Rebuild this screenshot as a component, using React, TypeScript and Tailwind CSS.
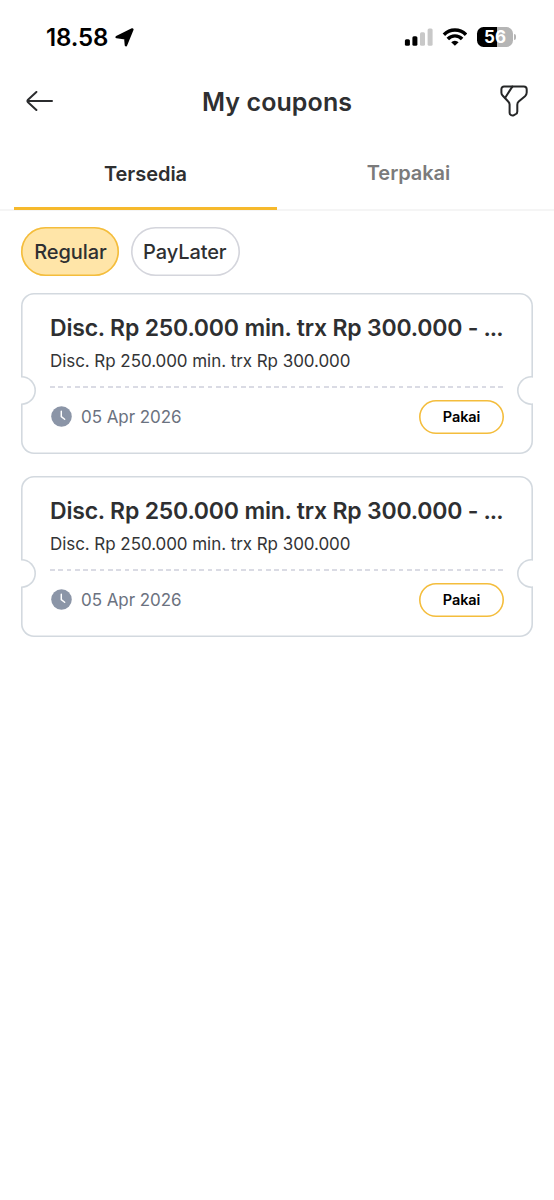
import React from "react";

function StatusBar() {
  return (
    <div className="flex h-[74px] items-center justify-between pl-[46px] pr-[38px]">
      <div className="flex items-center gap-[7px] pt-[1px]">
        <span className="text-[24px] leading-[30px] font-semibold tracking-[-0.15px] text-black">18.58</span>
        <svg width="19" height="19" viewBox="0 0 18 18">
          <path d="M16.4 1.4 L10.4 16.2 L9.8 9.6 L1.6 8.6 Z" fill="#000" stroke="#000" strokeWidth="2.4" strokeLinejoin="round" />
        </svg>
      </div>
      <div className="flex items-center">
        <svg className="-mr-px" width="29" height="18" viewBox="-0.3 0 29 18">
          <rect x="0.6" y="11.3" width="5" height="6.4" rx="1.5" fill="#000" />
          <rect x="8.1" y="8.2" width="5" height="9.5" rx="1.5" fill="#000" />
          <rect x="15.7" y="4.3" width="5" height="13.4" rx="1.5" fill="#c8c8c8" />
          <rect x="23.3" y="0.5" width="5" height="17.2" rx="1.5" fill="#c8c8c8" />
        </svg>
        <svg className="ml-[10px]" width="25" height="18" viewBox="0 0 25 18">
          <g fill="none" stroke="#000" strokeWidth="3.4">
            <path d="M1.9 6.7 A15.4 15.4 0 0 1 24 6.7" />
            <path d="M5.8 11 A9.7 9.7 0 0 1 20.1 11" />
          </g>
          <path d="M12.9 17.8 L9.2 14.2 A5.2 5.2 0 0 1 16.6 14.2 Z" fill="#000" />
        </svg>
        <div className="ml-[10px] flex h-[20px] w-[36px] items-center justify-center overflow-hidden rounded-[6.5px] bg-[linear-gradient(to_right,#000_56%,#b5b5b5_56%)]">
          <span className="text-[17px] leading-[20px] font-bold text-white">56</span>
        </div>
        <div className="ml-[1px] h-[6px] w-[2px] rounded-r-full bg-[#b5b5b5]" />
      </div>
    </div>
  );
}

function Header() {
  return (
    <header className="flex h-[56px] items-center justify-between pl-[26px] pr-[26px]">
      <svg className="-mt-[2px]" width="28" height="20" viewBox="0 0 28 20" fill="none" stroke="#2b2c2e" strokeWidth="2" strokeLinecap="round" strokeLinejoin="round">
        <path d="M26 10H1.5M10.4 1L2 8.8Q0.8 10 2 11.2L10.4 19" />
      </svg>
      <h1 className="text-[25px] leading-[30px] font-semibold tracking-[0.1px] text-[#2e2f31]">My coupons</h1>
      <svg className="-mt-[2px]" width="28" height="32" viewBox="0 0 28 32" fill="none" stroke="#252627" strokeWidth="2" strokeLinecap="round" strokeLinejoin="round">
        <path d="M4 1.4H23.8C25.5 1.4 26.7 2.6 26.7 4.2V7.6C26.7 8.9 26 10.3 25 11.2L18.7 16.5C17.8 17.3 17.3 18.5 17.3 19.8V26.4C17.3 27.4 16.7 28.5 15.9 29L14 30.1C12.1 31.2 9.6 30 9.6 27.8V19.6C9.6 18.6 9 17.3 8.2 16.5L2.8 10.7C2 9.9 1.4 8.6 1.4 7.7V4.2C1.4 2.6 2.6 1.4 4 1.4Z" />
        <path d="M12.3 1.6L5.2 12.8" />
      </svg>
    </header>
  );
}

function Tabs() {
  return (
    <nav className="flex h-[81px] border-b-2 border-[#f5f5f5] px-[14px] text-[20px] leading-[26px] font-semibold tracking-[-0.05px]">
      <div className="-mb-[1px] flex w-[263px] items-start justify-center border-b-3 border-[#f6b92c] pt-[31px] text-[#2e2f31]">
        <span>Tersedia</span>
      </div>
      <div className="flex w-[263px] items-start justify-center pt-[30px] text-[#7b7b7b]">
        <span>Terpakai</span>
      </div>
    </nav>
  );
}

function Coupon() {
  return (
    <article className="relative h-[161px] rounded-[13px] pr-[29px] pl-[28.6px] pt-[20px] shadow-[inset_0_0_0_1.6px_#d3d9df]">
      <h2 className="text-[23px] leading-[30px] font-semibold tracking-[-0.2px] whitespace-nowrap text-[#2e2f31]">
        Disc. Rp 250.000 min. trx Rp 300.000 - <span className="-ml-[0.5px] tracking-[-0.9px]">...</span>
      </h2>
      <p className="mt-[6px] text-[17px] leading-[24px] tracking-[-0.06px] whitespace-nowrap text-[#333436]">Disc. Rp 250.000 min. trx Rp 300.000</p>
      <div className="mt-[13px] h-[2px] w-[454px] bg-[repeating-linear-gradient(to_right,#dadbe4_0px,#dadbe4_4.7px,transparent_4.7px,transparent_8.3px)]" />
      <div className="mt-[12px] flex h-[34px] items-center justify-between">
        <div className="-mt-[1px] flex items-center gap-[9px] pl-[1px]">
          <svg width="21" height="21" viewBox="0 0 20 20">
            <circle cx="10" cy="10" r="9.8" fill="#8b95a7" />
            <path d="M9.8 5V10.2L13 12.6" fill="none" stroke="#fff" strokeWidth="1.4" strokeLinecap="round" strokeLinejoin="round" />
          </svg>
          <span className="text-[17px] leading-[24px] tracking-[-0.05px] text-[#6b7280]">05 Apr 2026</span>
        </div>
        <button className="h-[34px] w-[85px] rounded-full text-[14.5px] leading-[20px] font-semibold tracking-[-0.1px] text-black shadow-[inset_0_0_0_1.6px_#f4bd3c]">Pakai</button>
      </div>
      <span className="absolute top-[83px] left-0 flex h-[29px] w-[15px] justify-end overflow-hidden">
        <span className="size-[29px] shrink-0 rounded-full bg-white shadow-[inset_0_0_0_1.6px_#d3d9df]" />
      </span>
      <span className="absolute top-[83px] right-0 flex h-[29px] w-[16px] overflow-hidden">
        <span className="size-[29px] shrink-0 rounded-full bg-white shadow-[inset_0_0_0_1.6px_#d3d9df]" />
      </span>
    </article>
  );
}

export default function App() {
  return (
    <div className="min-h-[1200px] w-[554px] bg-white font-['Inter','Liberation_Sans',sans-serif]">
      <StatusBar />
      <Header />
      <Tabs />
      <main className="pr-[21px] pl-[21.4px] pt-[16px]">
        <div className="flex gap-[11.4px] text-[20px] leading-[26px] font-medium tracking-[-0.1px] text-[#2e2f31]">
          <button className="h-[49px] w-[98px] rounded-full bg-[#ffe5a8] shadow-[inset_0_0_0_1.6px_#f4bd3c]">Regular</button>
          <button className="h-[49px] w-[109px] rounded-full bg-white pr-[1px] pl-0 shadow-[inset_0_0_0_1.6px_#d4d5dc]">PayLater</button>
        </div>
        <div className="mt-[17px] flex flex-col gap-[22.4px]">
          <Coupon />
          <Coupon />
        </div>
      </main>
    </div>
  );
}
